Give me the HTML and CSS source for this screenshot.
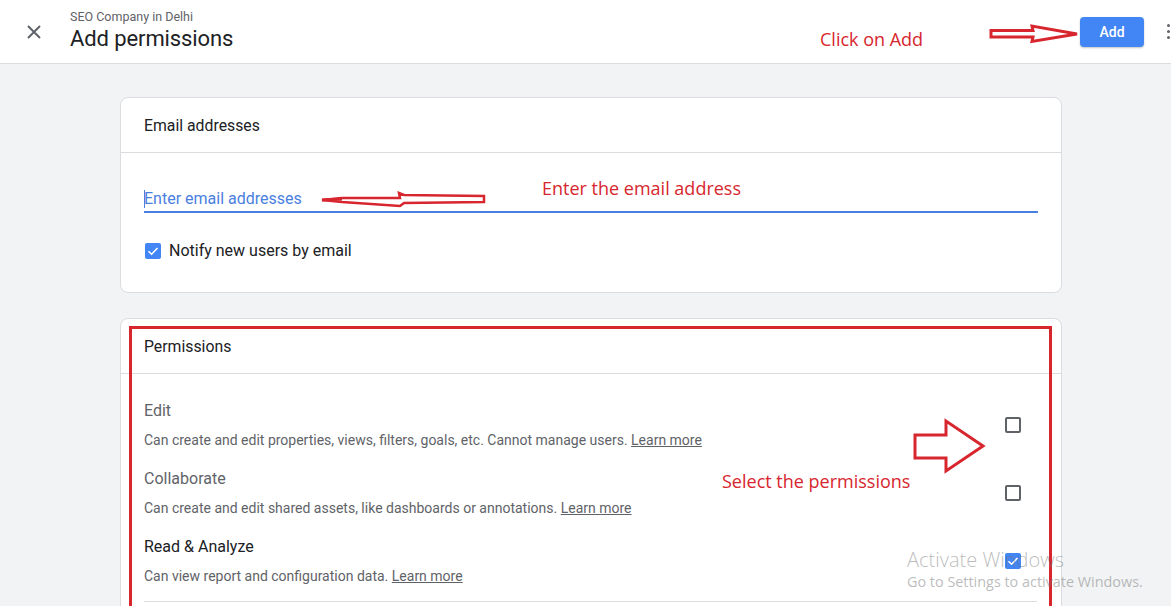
FILE: index.html
```html
<!DOCTYPE html>
<html>
<head>
<meta charset="utf-8">
<link rel="stylesheet" href="styles.css">
</head>
<body>
<div class="page">
  <header class="topbar">
    <div class="close">
      <svg width="16" height="16" viewBox="0 0 16 16"><path d="M2 2L14 14M14 2L2 14" stroke="#5f6368" stroke-width="2"/></svg>
    </div>
    <div class="titles">
      <div class="subtitle">SEO Company in Delhi</div>
      <div class="title">Add permissions</div>
    </div>
    <div class="spacer"></div>
    <button class="add-btn">Add</button>
    <div class="more"><span></span><span></span><span></span></div>
  </header>

  <main class="content">
    <section class="card">
      <div class="card-head">Email addresses</div>
      <div class="card-body email-body">
        <div class="email-input">Enter email addresses</div>
        <label class="notify">
          <span class="cb checked"><svg viewBox="0 0 16 16" width="16" height="16"><path d="M3.5 8.2L6.6 11.2L12.5 5" fill="none" stroke="#fff" stroke-width="1.6"/></svg></span>
          <span>Notify new users by email</span>
        </label>
      </div>
    </section>

    <section class="card card-perm">
      <div class="card-head">Permissions</div>
      <div class="card-body perm-body">
        <div class="perm-row">
          <div class="perm-text">
            <div class="perm-title muted">Edit</div>
            <div class="perm-desc">Can create and edit properties, views, filters, goals, etc. Cannot manage users. <a>Learn more</a></div>
          </div>
          <span class="cb"></span>
        </div>
        <div class="perm-row">
          <div class="perm-text">
            <div class="perm-title muted">Collaborate</div>
            <div class="perm-desc">Can create and edit shared assets, like dashboards or annotations. <a>Learn more</a></div>
          </div>
          <span class="cb"></span>
        </div>
        <div class="perm-row">
          <div class="perm-text">
            <div class="perm-title">Read &amp; Analyze</div>
            <div class="perm-desc">Can view report and configuration data. <a>Learn more</a></div>
          </div>
          <span class="cb checked"><svg viewBox="0 0 16 16" width="16" height="16"><path d="M3.5 8.2L6.6 11.2L12.5 5" fill="none" stroke="#fff" stroke-width="1.6"/></svg></span>
        </div>
        <div class="perm-sep"></div>
      </div>
    </section>
  </main>

  <!-- annotations overlay -->
  <div class="note note-add">Click on Add</div>
  <svg class="arrow-add" width="92" height="22" viewBox="0 0 92 22"><path d="M2 7.5H44L43 3L88 11L43 18.5L44 14H2Z" fill="none" stroke="#d7262e" stroke-width="3" stroke-linejoin="miter"/></svg>

  <div class="note note-email">Enter the email address</div>
  <svg class="arrow-email" width="168" height="20" viewBox="0 0 168 20"><path d="M2 9L22 7L80 7L79 2L84 4L164 5L164 11L84 12L80 15L22 11Z" fill="none" stroke="#d7262e" stroke-width="2.5"/><path d="M2 9L22 8" stroke="#d7262e" stroke-width="3"/></svg>

  <div class="redbox"></div>
  <svg class="arrow-perm" width="76" height="58" viewBox="0 0 76 58"><path d="M2 17H33V3L70 28L33 53V40H2Z" fill="none" stroke="#d7262e" stroke-width="3"/></svg>
  <div class="note note-perm">Select the permissions</div>

  <div class="watermark">
    <div class="wm1">Activate Windows</div>
    <div class="wm2">Go to Settings to activate Windows.</div>
  </div>
</div>
</body>
</html>
```

FILE: styles.css
```css
* { box-sizing: border-box; }
html, body { margin: 0; padding: 0; }
body {
  width: 1171px;
  height: 606px;
  overflow: hidden;
  background: #f1f3f4;
  font-family: Roboto, "Liberation Sans", Arial, sans-serif;
  color: #202124;
}
.page { position: relative; width: 1171px; height: 606px; overflow: hidden; }

.topbar {
  height: 64px;
  background: #fff;
  border-bottom: 1px solid #dadce0;
  display: flex;
  align-items: center;
}
.close { width: 16px; height: 16px; margin-left: 26px; margin-right: 28px; display: flex; }
.titles { display: flex; flex-direction: column; margin-top: -1px; }
.subtitle { font-size: 12.5px; color: #5f6368; line-height: 16px; margin-top: -1px; }
.title { font-size: 22px; line-height: 26px; color: #202124; letter-spacing: -0.1px; margin-top: 1px; }
.spacer { flex: 1; }
.add-btn {
  width: 64px;
  height: 30px;
  margin-top: 1px;
  background: #4285f4;
  color: #fff;
  border: none;
  border-radius: 4px;
  font-family: Roboto, sans-serif;
  font-weight: 500;
  font-size: 14px;
  box-shadow: 0 1px 2px rgba(60,64,67,.3);
  margin-right: 23px;
}
.more { display: flex; flex-direction: column; gap: 3px; width: 4px; }
.more span { width: 3px; height: 3px; background: #5f6368; border-radius: 50%; }

.content {
  padding-top: 33px;
  padding-left: 120px;
  display: flex;
  flex-direction: column;
  align-items: flex-start;
  gap: 25px;
}
.card {
  width: 942px;
  background: #fff;
  border: 1px solid #dadce0;
  border-radius: 8px;
}
.card-head {
  height: 55px;
  padding: 0 23px;
  display: flex;
  align-items: center;
  font-size: 15.8px;
  color: #202124;
  border-bottom: 1px solid #dadce0;
}
.card-body { padding: 0 23px; }
.email-body { padding-top: 35px; padding-bottom: 32px; }
.email-input {
  font-size: 16px;
  line-height: 22px;
  color: #4a80e0;
  padding-bottom: 1px;
  border-bottom: 2px solid #4a80e0;
  position: relative;
}
.email-input::before {
  content: "";
  position: absolute;
  left: 0; top: 2px;
  width: 1px; height: 18px;
  background: #4a80e0;
}
.notify {
  display: flex;
  align-items: center;
  gap: 8px;
  margin-top: 28px;
  font-size: 16px;
  color: #202124;
  margin-left: 1px;
}
.cb {
  width: 16px;
  height: 16px;
  border: 2px solid #5f6368;
  border-radius: 2px;
  display: inline-flex;
  flex: none;
}
.cb.checked { background: #4285f4; border: none; }

.card-perm { padding-bottom: 40px; }
.perm-body { padding-top: 25px; padding-right: 40px; }
.perm-row {
  display: flex;
  align-items: center;
  margin-bottom: 17px;
}
.perm-text { flex: 1; }
.perm-title { font-size: 16px; line-height: 24px; color: #202124; }
.perm-title.muted { color: #5f6368; }
.perm-desc { font-size: 14px; line-height: 20px; color: #5f6368; margin-top: 7px; }
.perm-desc a { text-decoration: underline; color: #5f6368; }
.perm-sep { border-top: 1px solid #dadce0; margin-top: -2px; margin-right: -16px; }

/* annotations */
.note {
  position: absolute;
  font-family: "Open Sans", Lato, sans-serif;
  color: #d7262e;
  font-size: 18px;
  white-space: nowrap;
}
.note-add { left: 820px; top: 27px; }
.note-email { left: 542px; top: 176px; }
.note-perm { left: 722px; top: 469px; }
.arrow-add { position: absolute; left: 989px; top: 23px; }
.arrow-email { position: absolute; left: 320px; top: 191px; }
.arrow-perm { position: absolute; left: 913px; top: 418px; }
.redbox {
  position: absolute;
  left: 129px;
  top: 326px;
  width: 923px;
  height: 300px;
  border: 3px solid #d7262e;
}
.watermark {
  position: absolute;
  left: 907px;
  top: 548px;
  font-family: "Open Sans", sans-serif;
  color: rgba(120,120,120,0.5);
}
.wm1 { font-size: 20px; line-height: 24px; font-weight: 300; }
.wm2 { font-size: 14.4px; line-height: 20px; }
```
